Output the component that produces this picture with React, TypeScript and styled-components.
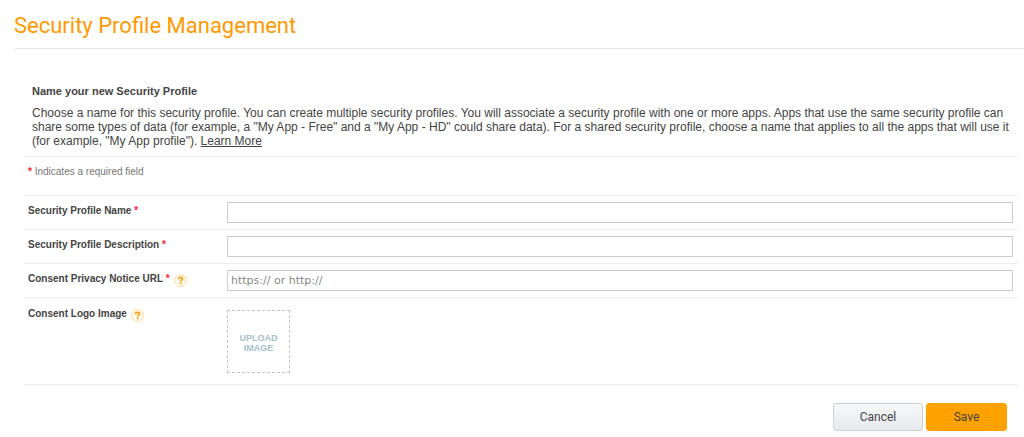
import React from "react";
import styled, { createGlobalStyle } from "styled-components";

const GlobalStyle = createGlobalStyle`
  * { box-sizing: border-box; }
  body {
    margin: 0;
    background: #fff;
    color: #444;
    font-family: "Liberation Sans", Arial, sans-serif;
    font-size: 10px;
    line-height: 14px;
  }
`;

const Page = styled.main`
  padding: 9px 0 6px;
`;

const Header = styled.header`
  margin-left: 14px;
  padding-bottom: 5px;
  border-bottom: 1px solid #e7e7e7;
`;

const Title = styled.h1`
  margin: 0;
  color: #ff9900;
  font: 400 22px/34px Roboto, sans-serif;
`;

const Form = styled.form`
  margin: 35px 6px 0 24px;
`;

const Intro = styled.section`
  padding: 0 8px 8px;
  border-bottom: 1px solid #eee;
`;

const IntroTitle = styled.h2`
  margin: 0 0 8px;
  font-size: 11px;
  line-height: 14px;
`;

const IntroText = styled.p`
  margin: 0;
  font-size: 12px;
  line-height: 14px;
`;

const Link = styled.a`
  color: inherit;
  text-decoration: underline;
`;

const RequiredNote = styled.p`
  margin: 0;
  padding: 8px 4px 16px;
  border-bottom: 1px solid #eee;
  color: #777;
`;

const Star = styled.span`
  color: #f22;
  font-weight: 700;
`;

const Row = styled.div<{ $tall?: boolean }>`
  display: grid;
  grid-template-columns: 199px minmax(0, 1fr);
  padding: ${(p) => (p.$tall ? "12px 5px 11px 4px" : "6px 5px 6px 4px")};
  border-bottom: 1px solid #eee;
`;

const LabelCell = styled.div<{ $raised?: boolean }>`
  display: flex;
  align-items: flex-start;
  gap: 4px;
  margin-top: ${(p) => (p.$raised ? "-3px" : "2px")};
`;

const Label = styled.label`
  font-weight: 700;
`;

const HelpButton = styled.button`
  display: block;
  margin: 2px 0 0;
  padding: 0;
  border: 0;
  background: none;
  line-height: 0;
  cursor: pointer;
`;

const TextInput = styled.input`
  width: 100%;
  height: 21px;
  padding: 0 3px;
  border: 1px solid #ccc;
  border-radius: 0;
  background: #fff;
  color: #444;
  font: 11px "DejaVu Sans", Verdana, sans-serif;

  &::placeholder {
    color: #888;
    opacity: 1;
  }
`;

const UploadButton = styled.button`
  display: block;
  width: 63px;
  height: 63px;
  padding: 2px 8px 0;
  border: 1px dashed #c4c4c4;
  background: #fff;
  color: #a5bfca;
  font: 700 9px/10px "Liberation Sans", Arial, sans-serif;
  cursor: pointer;
`;

const Actions = styled.div`
  display: flex;
  justify-content: flex-end;
  gap: 3px;
  padding: 18px 11px 0 0;
`;

const ActionButton = styled.button<{ $primary?: boolean }>`
  width: ${(p) => (p.$primary ? "81px" : "90px")};
  height: 28px;
  padding: 0;
  border: 1px solid ${(p) => (p.$primary ? "#ffa200" : "#cdd2d8")};
  border-radius: 3px;
  background: ${(p) => (p.$primary ? "#ffa200" : "linear-gradient(#f7f8fa, #e7e9ec)")};
  color: #444;
  font: 400 12px/16px Roboto, sans-serif;
  cursor: pointer;
`;

function Help({ topic }: { topic: string }) {
  return (
    <HelpButton type="button" aria-label={`Help: ${topic}`}>
      <svg width="13" height="13" viewBox="0 0 13 13" fill="none">
        <circle cx="6.5" cy="6.5" r="5.9" fill="#fff9ec" stroke="#ffdc9f" />
        <path d="M4.5 5.2C4.5 3.8 5.3 3.2 6.5 3.2c1.2 0 2 .6 2 1.6 0 1.4-1.9 1.4-1.9 2.8" stroke="#ff9d0a" strokeWidth="1.6" />
        <path d="M6.6 8.4v1.7" stroke="#ff9d0a" strokeWidth="1.7" />
      </svg>
    </HelpButton>
  );
}

const fields = [
  { id: "name", label: "Security Profile Name" },
  { id: "description", label: "Security Profile Description" },
  { id: "privacy", label: "Consent Privacy Notice URL", placeholder: "https:// or http://", help: true },
];

export default function App() {
  return (
    <Page>
      <GlobalStyle />
      <Header>
        <Title>Security Profile Management</Title>
      </Header>
      <Form onSubmit={(e) => e.preventDefault()}>
        <Intro>
          <IntroTitle>Name your new Security Profile</IntroTitle>
          <IntroText>
            Choose a name for this security profile. You can create multiple security profiles. You will associate a
            security profile with one or more apps. Apps that use the same security profile can share some types of data
            (for example, a "My App - Free" and a "My App - HD" could share data). For a shared security profile, choose
            a name that applies to all the apps that will use it (for example, "My App profile").{" "}
            <Link href="#learn-more">Learn More</Link>
          </IntroText>
        </Intro>
        <RequiredNote>
          <Star>*</Star> Indicates a required field
        </RequiredNote>
        {fields.map((f) => (
          <Row key={f.id}>
            <LabelCell>
              <Label htmlFor={f.id}>
                {f.label} <Star>*</Star>
              </Label>
              {f.help && <Help topic={f.label} />}
            </LabelCell>
            <TextInput id={f.id} type="text" placeholder={f.placeholder} required />
          </Row>
        ))}
        <Row $tall>
          <LabelCell $raised>
            <Label htmlFor="logo">Consent Logo Image</Label>
            <Help topic="Consent Logo Image" />
          </LabelCell>
          <UploadButton id="logo" type="button">UPLOAD IMAGE</UploadButton>
        </Row>
        <Actions>
          <ActionButton type="button">Cancel</ActionButton>
          <ActionButton type="submit" $primary>Save</ActionButton>
        </Actions>
      </Form>
    </Page>
  );
}
